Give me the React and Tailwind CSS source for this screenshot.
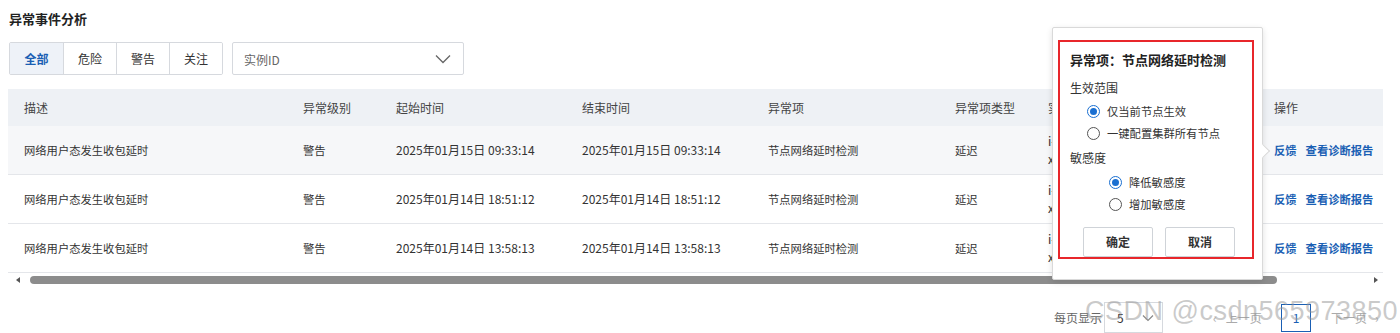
import React from "react";

const font = { fontFamily: '"Noto Sans CJK SC", "Noto Sans", sans-serif' };

const gridCols = "grid-cols-[279px_93px_186px_186px_187px_93px_226px_125px]";

const rows = [
  { start: "2025年01月15日 09:33:14", hover: true },
  { start: "2025年01月14日 18:51:12" },
  { start: "2025年01月14日 13:58:13" },
];

function Radio({ checked, label }) {
  return (
    <div className="flex items-center gap-[7px] h-[22px]">
      <span
        className={`w-[13px] h-[13px] rounded-full border flex items-center justify-center bg-white ${
          checked ? "border-[#1a6fd1]" : "border-[#555]"
        }`}
      >
        {checked && <span className="w-[7px] h-[7px] rounded-full bg-[#1a6fd1]" />}
      </span>
      <span className="text-[11.3px] text-[#333]">{label}</span>
    </div>
  );
}

export default function App() {
  return (
    <div className="relative w-[1400px] h-[333px] bg-white overflow-hidden text-[#333]" style={font}>
      <div className="pl-[9px] pt-[10px]">
        <div className="text-[13px] font-bold text-[#222] leading-[18px]">异常事件分析</div>
        <div className="flex mt-[14px] h-[33px]">
          <div className="flex border border-[#d6d9de] rounded-[2px] overflow-hidden">
            {["全部", "危险", "警告", "关注"].map((t, i) => (
              <div
                key={t}
                className={`w-[53px] flex items-center justify-center text-[12px] ${
                  i > 0 ? "border-l border-[#d6d9de]" : ""
                } ${i === 0 ? "bg-[#eef2f8] text-[#1a5fb4] font-bold" : "bg-white text-[#333]"}`}
              >
                {t}
              </div>
            ))}
          </div>
          <div className="ml-[9px] w-[232px] border border-[#d6d9de] rounded-[2px] flex items-center justify-between pl-[11px] pr-[12px]">
            <span className="text-[12px] text-[#666] mt-[2px]">实例ID</span>
            <svg width="16" height="10" viewBox="0 0 16 10" fill="none">
              <path d="M1 1.5 L8 8.5 L15 1.5" stroke="#666" strokeWidth="1.3" />
            </svg>
          </div>
        </div>
      </div>

      {/* table */}
      <div className="ml-[8px] mt-[14px] w-[1375px]">
        <div className={`grid ${gridCols} h-[37px] bg-[#eef1f5] items-center text-[12px] text-[#444]`}>
          {["描述", "异常级别", "起始时间", "结束时间", "异常项", "异常项类型", "实例", "操作"].map((h) => (
            <div key={h} className="pl-[16px]">{h}</div>
          ))}
        </div>
        {rows.map((r, i) => (
          <div
            key={i}
            className={`grid ${gridCols} h-[49px] items-center text-[11.3px] text-[#333] border-b border-[#e4e6ea] ${
              r.hover ? "bg-[#f6f7f9]" : "bg-white"
            }`}
          >
            <div className="pl-[16px]">网络用户态发生收包延时</div>
            <div className="pl-[16px]">警告</div>
            <div className="pl-[16px] text-[12px]">{r.start}</div>
            <div className="pl-[16px] text-[12px]">{r.start}</div>
            <div className="pl-[16px]">节点网络延时检测</div>
            <div className="pl-[16px]">延迟</div>
            <div className="pl-[16px] leading-[18px] text-[12px]">
              <div>i-</div>
              <div>x</div>
            </div>
            <div className="pl-[16px] flex gap-[9px] text-[#1a5fb4] font-bold">
              <span>反馈</span>
              <span>查看诊断报告</span>
            </div>
          </div>
        ))}
        {/* scrollbar */}
        <div className="h-[14px] flex items-center bg-white">
          <svg width="22" height="14" viewBox="0 0 22 14">
            <path d="M8 7 L12 4 L12 10 Z" fill="#555" />
          </svg>
          <div className="w-[1247px] h-[8px] rounded-full bg-[#8c8c8c]" />
          <div className="flex-1" />
          <svg width="16" height="14" viewBox="0 0 16 14">
            <path d="M7 4 L11 7 L7 10 Z" fill="#555" />
          </svg>
        </div>
      </div>

      {/* pagination */}
      <div className="absolute left-[1054px] top-[302px] flex items-center h-[31px] text-[12px] text-[#666]">
        <span>每页显示</span>
        <div className="ml-[2px] w-[59px] h-[31px] border border-[#d6d9de] flex items-center justify-between pl-[12px] pr-[8px] text-[#333]">
          <span>5</span>
          <svg width="12" height="8" viewBox="0 0 12 8" fill="none">
            <path d="M1 1.5 L6 6.5 L11 1.5" stroke="#888" strokeWidth="1.2" />
          </svg>
        </div>
        <div className="ml-[50px] w-[53px] flex items-center gap-[9px] text-[#aaa]">
          <span>‹</span>
          <span>上一页</span>
        </div>
        <div className="ml-[15px] w-[30px] h-[28px] border border-[#1a5fb4] text-[#1a5fb4] flex items-center justify-center">1</div>
        <div className="ml-[20px] flex items-center gap-[8px] text-[#aaa]">
          <span>下一页</span>
          <span>›</span>
        </div>
      </div>

      {/* watermark */}
      <div
        className="absolute left-[1085px] top-[291px] text-[27px] text-[rgba(150,150,150,0.5)] tracking-[0.5px] pointer-events-none"
        style={{ fontFamily: '"Liberation Sans", Arial, sans-serif' }}
      >
        CSDN @csdn565973850
      </div>

      {/* popover */}
      <div className="absolute left-[1052px] top-[27px] w-[211px] h-[253px] bg-white border border-[#d9d9d9] rounded-[2px] shadow-[0_2px_6px_rgba(0,0,0,0.12)]">
        <div className="absolute right-[-6px] top-[118px] w-[10px] h-[10px] bg-white border-r border-t border-[#d9d9d9] rotate-45" />
        <div className="absolute left-[5px] top-[12px] w-[196px] h-[219px] border-2 border-[#e8262b] pl-[10px] pt-[9px]">
          <div className="text-[13px] font-bold text-[#222] leading-[18px]">异常项：节点网络延时检测</div>
          <div className="mt-[10px] text-[12px] text-[#333] leading-[18px]">生效范围</div>
          <div className="ml-[17px] mt-[3px]">
            <Radio checked label="仅当前节点生效" />
            <Radio label="一键配置集群所有节点" />
          </div>
          <div className="mt-[5px] text-[12px] text-[#333] leading-[18px]">敏感度</div>
          <div className="ml-[39px] mt-[4px]">
            <Radio checked label="降低敏感度" />
            <Radio label="增加敏感度" />
          </div>
          <div className="flex gap-[12px] ml-[13px] mt-[12px]">
            <div className="w-[70px] h-[30px] border border-[#cfd3d8] rounded-[2px] flex items-center justify-center text-[12px] font-bold text-[#333]">确定</div>
            <div className="w-[70px] h-[30px] border border-[#cfd3d8] rounded-[2px] flex items-center justify-center text-[12px] font-bold text-[#333]">取消</div>
          </div>
        </div>
      </div>
    </div>
  );
}
